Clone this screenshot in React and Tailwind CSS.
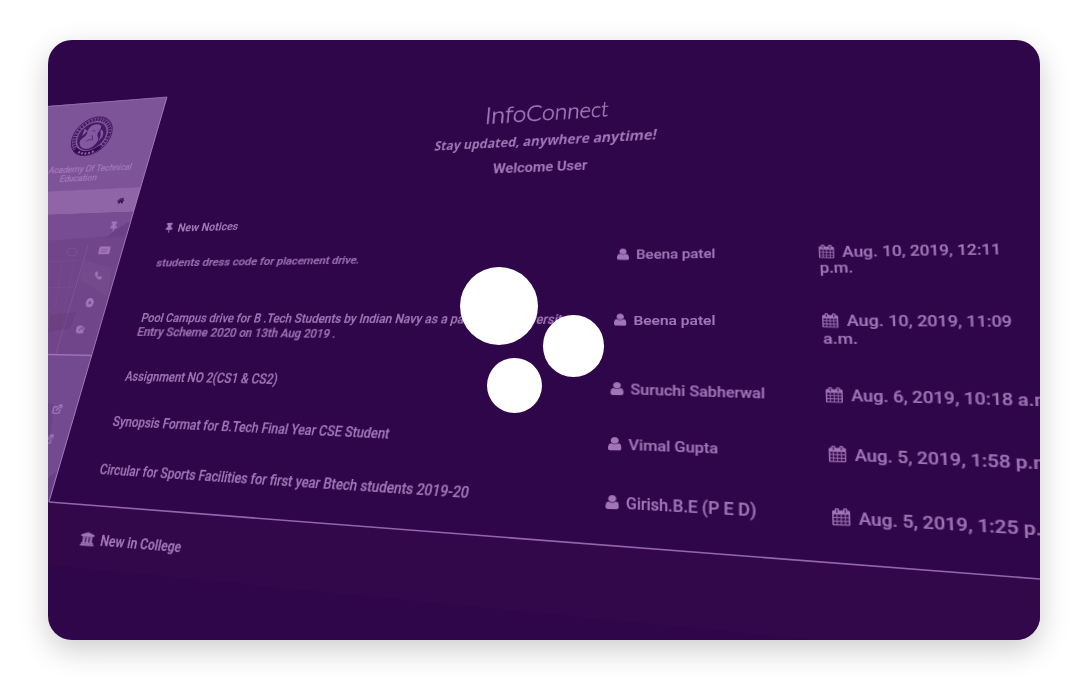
import { useLayoutEffect, useRef } from "react";
import { FaThumbtack, FaUniversity, FaPhoneAlt, FaHome } from "react-icons/fa";
import { ExternalLink } from "lucide-react";

// Solves the 8 unknowns of the projective map taking four points to four others.
function homography(src, dst) {
  const m = [];
  src.forEach(([x, y], i) => {
    const [u, v] = dst[i];
    m.push([x, y, 1, 0, 0, 0, -u * x, -u * y, u]);
    m.push([0, 0, 0, x, y, 1, -v * x, -v * y, v]);
  });
  for (let c = 0; c < 8; c++) {
    let p = c;
    for (let r = c + 1; r < 8; r++) if (Math.abs(m[r][c]) > Math.abs(m[p][c])) p = r;
    [m[c], m[p]] = [m[p], m[c]];
    for (let r = 0; r < 8; r++) {
      if (r === c) continue;
      const f = m[r][c] / m[c][c];
      for (let k = c; k < 9; k++) m[r][k] -= f * m[c][k];
    }
  }
  return m.map((row, i) => row[8] / row[i]);
}

// from / to: baseline ends; h0 / h1: height at each end; slant: lean of the top edge.
function Tilted({ from, to, h0, h1 = h0, slant = 0, top = 0.1, base = 0.8125, className = "", children }) {
  const ref = useRef(null);
  useLayoutEffect(() => {
    const el = ref.current;
    const w = el.offsetWidth;
    const h = el.offsetHeight;
    const [a, b, c, d, e, f, g, i] = homography(
      [[0, base * h], [w, base * h], [w, top * h], [0, top * h]],
      [from, to, [to[0] + slant, to[1] - h1], [from[0] + slant, from[1] - h0]]
    );
    el.style.transform = `matrix3d(${[a, d, 0, g, b, e, 0, i, 0, 0, 1, 0, c, f, 0, 1].join(",")})`;
  });
  return (
    <div ref={ref} className={`absolute left-0 top-0 origin-top-left whitespace-nowrap text-[16px] leading-none ${className}`}>
      {children}
    </div>
  );
}

function TiltedIcon({ x, y, w, h, rise = 0, slant = 0, className = "", children }) {
  return (
    <Tilted from={[x, y + h]} to={[x + w, y + h + rise]} h0={h} slant={slant} top={0} base={1} className={className}>
      {children}
    </Tilted>
  );
}

const UserIcon = () => (
  <svg viewBox="0 128 1280 1536" preserveAspectRatio="none" className="block h-4 w-4" fill="currentColor">
    <path d="M1280 1399q0 109-62.5 187t-150.5 78H213q-88 0-150.5-78T0 1399q0-85 8.5-160.5t31.5-152 58.5-131 94-89T327 832q131 128 313 128t313-128q76 0 134.5 34.5t94 89 58.5 131 31.5 152 8.5 160.5zm-256-887q0 159-112.5 271.5T640 896 368.5 783.5 256 512t112.5-271.5T640 128t271.5 112.5T1024 512z" />
  </svg>
);

const CalendarIcon = () => (
  <svg viewBox="0 0 1664 1792" preserveAspectRatio="none" className="block h-4 w-4" fill="currentColor" stroke="currentColor" strokeWidth="30">
    <path d="M128 1664h288v-288H128v288zm352 0h320v-288H480v288zM128 1312h288V992H128v320zm352 0h320V992H480v320zM128 928h288V640H128v288zm736 736h320v-288H864v288zM480 928h320V640H480v288zm768 736h288v-288h-288v288zM864 1312h320V992H864v320zM512 448V160q0-13-9.5-22.5T480 128h-64q-13 0-22.5 9.5T384 160v288q0 13 9.5 22.5T416 480h64q13 0 22.5-9.5T512 448zm736 864h288V992h-288v320zM864 928h320V640H864v288zm384 0h288V640h-288v288zm32-480V160q0-13-9.5-22.5T1248 128h-64q-13 0-22.5 9.5T1152 160v288q0 13 9.5 22.5t22.5 9.5h64q13 0 22.5-9.5t9.5-22.5zm384-64v1280q0 52-38 90t-90 38H128q-52 0-90-38t-38-90V384q0-52 38-90t90-38h128v-96q0-66 47-113T416 0h64q66 0 113 47t47 113v96h384v-96q0-66 47-113t113-47h64q66 0 113 47t47 113v96h128q52 0 90 38t38 90z" />
  </svg>
);

const Backdrop = () => (
  <svg viewBox="0 0 1088 696" className="absolute inset-0 h-full w-full">
    <polygon points="48,502 1040,579 1040,662 48,565" fill="#32084b" />
    <clipPath id="side"><polygon points="40,106.500 167,97 49,502 40,502" /></clipPath>
    <g clipPath="url(#side)">
      <rect x="40" y="90" width="130" height="420" fill="#70458a" />
      <polygon points="40,90 170,90 170,185.500 48,191.700 40,192" fill="#7e5499" />
      <polygon points="40,192 170,185.500 170,210.500 48,215 40,215" fill="#8f65a8" />
      <polygon points="40,215 170,210.500 170,232 48,240.700 40,241" fill="#774c92" />
      <polygon points="104,239 118,228 140,216 140,234" fill="#6c4087" />
      <path d="M40 263l40-3M48 264v88M40 288l34-1M62 264l-7 45M74 261l-12 62" stroke="#7b5294" fill="none" opacity=".5" />
      <path d="M88 245L57 350l-8 30" stroke="#8058a0" fill="none" opacity=".8" />
      <polygon points="84,260 112,268 107,296 80,280" fill="#7b5292" opacity=".4" />
      <polygon points="50,315 76,312 70,328 48,332" fill="#633879" opacity=".35" />
      <ellipse cx="72" cy="252" rx="5" ry="4" stroke="#805898" fill="none" opacity=".7" />
      <polygon points="40,355 95,356 49,502 40,502" fill="#734a90" />
      <polygon points="40,402 54,404 50,440 40,442" fill="#65397f" opacity=".5" />
      <path d="M48 354.500L95 355.500" stroke="#9f72b6" strokeWidth="1.300" />
      <polygon points="40,484 56,472 49,502 40,502" fill="#5f357b" opacity=".5" />
    </g>
    <path d="M48 106.500L167 97" stroke="#9a70b0" strokeWidth=".8" />
    <path d="M167 97L49 502" stroke="#a77dbc" strokeWidth=".9" />
    <path d="M49 502L1040 579" stroke="#9564ad" strokeWidth="1.600" />
    <g transform="matrix(1 -.1 -.3 .98 91.800 136.300)">
      <circle r="19.500" fill="none" stroke="#4b2068" strokeWidth="1.200" />
      <circle r="17" fill="none" stroke="#431860" strokeWidth="3" strokeDasharray="1.900 1" />
      <circle r="14" fill="#451963" />
      <path d="M-8 10q-5-6-1-9 4-2 3-7 1-7 8-6 7 1 4 7-2 4 1 7 2 5-3 9-6 4-12-1zM8-6q4 3 3 8l-3 4q2-6-1-11zM-10-9l4 3-4 5z" fill="#8358a0" />
      <path d="M-4 5q2-3 5-1M-1-6l3 1M0-1l2 5" stroke="#5b317a" strokeWidth="1.100" fill="none" />
      <path d="M-13 12q12 10 25 0" stroke="#35094f" strokeWidth="4" fill="none" />
      <path d="M-9 15q9 5 17 0" stroke="#9268a9" strokeWidth="2" strokeDasharray="2 1.600" fill="none" />
    </g>
  </svg>
);

const people = [
  { name: "Beena patel", icon: [617, 248.5, 12, 11.5], from: [636, 259], to: [715, 258], h0: 9 },
  { name: "Beena patel", icon: [614, 313.5, 12.500, 12], from: [633.5, 325], to: [715, 325], h0: 9.700 },
  { name: "Suruchi Sabherwal", icon: [610.5, 382, 13, 13], from: [630.5, 394.300], to: [765.5, 398.300], h0: 10.500 },
  { name: "Vimal Gupta", icon: [608, 437, 13.5, 13.5], from: [628.5, 450.5], to: [718.5, 454], h0: 11 },
  { name: "Girish.B.E (P E D)", icon: [605.5, 495, 13.5, 14], from: [626, 509], to: [757, 516.500], h0: 11.5, h1: 12.5 },
];

const dates = [
  { text: "Aug. 10, 2019, 12:11", icon: [819, 244.5, 15.500, 13.500], from: [842.5, 256.5], to: [1001, 254], h0: 10.300 },
  { text: "p.m.", from: [820, 273], to: [853.5, 272.700], h0: 10 },
  { text: "Aug. 10, 2019, 11:09", icon: [822.5, 313, 16, 14.500], from: [847, 326], to: [1012, 326.800], h0: 10.800 },
  { text: "a.m.", from: [823.5, 343.300], to: [857.5, 343.500], h0: 10.300 },
  { text: "Aug. 6, 2019, 10:18 a.m.", icon: [826, 387, 17, 15.5], from: [851.5, 401.200], to: [1058, 406.600], h0: 11.300, h1: 12 },
  { text: "Aug. 5, 2019, 1:58 p.m.", icon: [829, 445.5, 17.500, 16.500], from: [855, 461], to: [1058, 470], h0: 11.5, h1: 12.5 },
  { text: "Aug. 5, 2019, 1:25 p.m.", icon: [832.5, 508, 18, 17.500], from: [859, 524.800], to: [1067, 537], h0: 12, h1: 13 },
];

const notices = [
  { text: "students dress code for placement drive.", from: [155.5, 266.5], to: [358.5, 263.5], h0: 8 },
  { text: "Pool Campus drive for B .Tech Students by Indian Navy as a part of the University", from: [140.500, 322], to: [567, 324], h0: 8.500, h1: 9.300 },
  { text: "Entry Scheme 2020 on 13th Aug 2019 .", from: [136.500, 335.700], to: [335, 337.700], h0: 8.700 },
  { text: "Assignment NO 2(CS1 & CS2)", from: [124.500, 380.700], to: [276.500, 384], h0: 9.300, h1: 9.800 },
  { text: "Synopsis Format for B.Tech Final Year CSE Student", from: [112, 426], to: [388, 438.700], h0: 9.700, h1: 10.300 },
  { text: "Circular for Sports Facilities for first year Btech students 2019-20", from: [99, 474], to: [467.500, 498], h0: 10, h1: 11.200 },
];

export default function App() {
  return (
    <main className="flex h-[696px] w-[1088px] items-start bg-white px-12 pt-10 font-['Roboto',sans-serif]">
      <section className="relative h-[600px] w-full overflow-hidden rounded-3xl bg-[#2f0649] text-[#a175b8] shadow-[0_10px_30px_rgba(0,0,0,0.2)]">
        <div className="absolute -left-12 -top-10 h-[696px] w-[1088px]">
          <Backdrop />
          <Tilted from={[48, 173.500]} to={[131, 169.500]} h0={6.500} slant={2} className="text-[#a77dbd] [-webkit-text-stroke:0.3px_currentColor]">Academy Of Technical</Tilted>
          <Tilted from={[59, 182]} to={[96, 180.300]} h0={6.500} slant={2} className="text-[#a77dbd] [-webkit-text-stroke:0.3px_currentColor]">Education</Tilted>

          <TiltedIcon x={116.500} y={197.500} w={7} h={7} rise={-0.400} slant={1.500} className="text-[#2f0649]"><FaHome className="block" /></TiltedIcon>
          <TiltedIcon x={108.500} y={221.500} w={9} h={10} slant={1.500}><FaThumbtack className="block" /></TiltedIcon>
          <TiltedIcon x={98} y={246.500} w={11} h={8} slant={1.800}>
            <svg viewBox="0 0 16 16" preserveAspectRatio="none" className="block h-4 w-4">
              <rect width="16" height="16" rx="2" fill="currentColor" />
              <path d="M3 6h10M3 10.500h8" stroke="#774c92" strokeWidth="1.600" />
            </svg>
          </TiltedIcon>
          <TiltedIcon x={94.500} y={271.500} w={7.500} h={8} slant={0.500}>
            <svg viewBox="0 0 16 16" className="block h-4 w-4" fill="currentColor">
              <path d="M3 0l3 1 1 4-2 2q1.500 3 4 4l2-2 4 2v3q-1 2-4 2Q7 15.500 3 11-1 5 1 2z" />
            </svg>
          </TiltedIcon>
          <TiltedIcon x={85} y={298} w={8} h={9.500} slant={1.500}>
            <svg viewBox="0 0 16 16" className="block h-4 w-4"><circle cx="8" cy="8" r="5.300" fill="none" stroke="currentColor" strokeWidth="5.400" /></svg>
          </TiltedIcon>
          <TiltedIcon x={75.500} y={325} w={9} h={9} slant={1.500}>
            <svg viewBox="0 0 16 16" className="block h-4 w-4">
              <path d="M3 1h6l6 5-2 4v5H3l-3-3V4z" fill="currentColor" />
              <path d="M5 11q-1-5 5-5M8 3.500l3.500 2.500L9 9" stroke="#70458a" strokeWidth="1.500" fill="none" />
            </svg>
          </TiltedIcon>
          <TiltedIcon x={51} y={404} w={10.500} h={10.500} slant={2}><ExternalLink size={16} strokeWidth={3.200} className="block" /></TiltedIcon>
          <TiltedIcon x={42} y={434} w={10.500} h={10.500} slant={2}><ExternalLink size={16} strokeWidth={3.200} className="block" /></TiltedIcon>

          <Tilted from={[484.500, 122.500]} to={[607.500, 115]} h0={16.500} h1={15} slant={1.500} className="font-['Lato',sans-serif] font-light [-webkit-text-stroke:0.4px_currentColor]">InfoConnect</Tilted>
          <Tilted from={[434, 150]} to={[656, 138.500]} h0={9} h1={10} slant={2} className="font-['Open_Sans',sans-serif] font-bold">Stay updated, anywhere anytime!</Tilted>
          <Tilted from={[492.500, 173.500]} to={[587, 169.700]} h0={9.500} slant={0.800} className="font-bold">Welcome User</Tilted>

          <TiltedIcon x={164} y={223} w={9} h={10} rise={-0.300} slant={1.500}><FaThumbtack className="block" /></TiltedIcon>
          <Tilted from={[177, 231.700]} to={[237.500, 230]} h0={7.800} slant={2} className="font-bold">New Notices</Tilted>
          {notices.map(({ text, ...pose }) => (
            <Tilted key={text} {...pose} slant={2.300} className="font-medium [-webkit-text-stroke:0.2px_currentColor]">{text}</Tilted>
          ))}

          {people.map(({ name, icon: [x, y, w, h], ...pose }) => (
            <div key={y}>
              <TiltedIcon x={x} y={y} w={w} h={h} rise={0.200}><UserIcon /></TiltedIcon>
              <Tilted {...pose} className="font-medium [-webkit-text-stroke:0.2px_currentColor]">{name}</Tilted>
            </div>
          ))}
          {dates.map(({ text, icon, ...pose }) => (
            <div key={text}>
              {icon && <TiltedIcon x={icon[0]} y={icon[1]} w={icon[2]} h={icon[3]} rise={0.500} slant={-0.500}><CalendarIcon /></TiltedIcon>}
              <Tilted {...pose} slant={-0.500} className="font-medium [-webkit-text-stroke:0.2px_currentColor]">{text}</Tilted>
            </div>
          ))}

          <TiltedIcon x={79.500} y={531} w={14} h={15} rise={1} slant={2}>
            <FaUniversity className="block" stroke="currentColor" strokeWidth="18" />
          </TiltedIcon>
          <Tilted from={[99.500, 545.700]} to={[180, 552.300]} h0={10.500} slant={2.200} className="font-bold">New in College</Tilted>

          <span className="absolute left-[460px] top-[266.500px] size-[78px] rounded-full bg-white" />
          <span className="absolute left-[542.500px] top-[315.300px] size-[61.500px] rounded-full bg-white" />
          <span className="absolute left-[487.300px] top-[357.500px] size-[55px] rounded-full bg-white" />
        </div>
      </section>
    </main>
  );
}
